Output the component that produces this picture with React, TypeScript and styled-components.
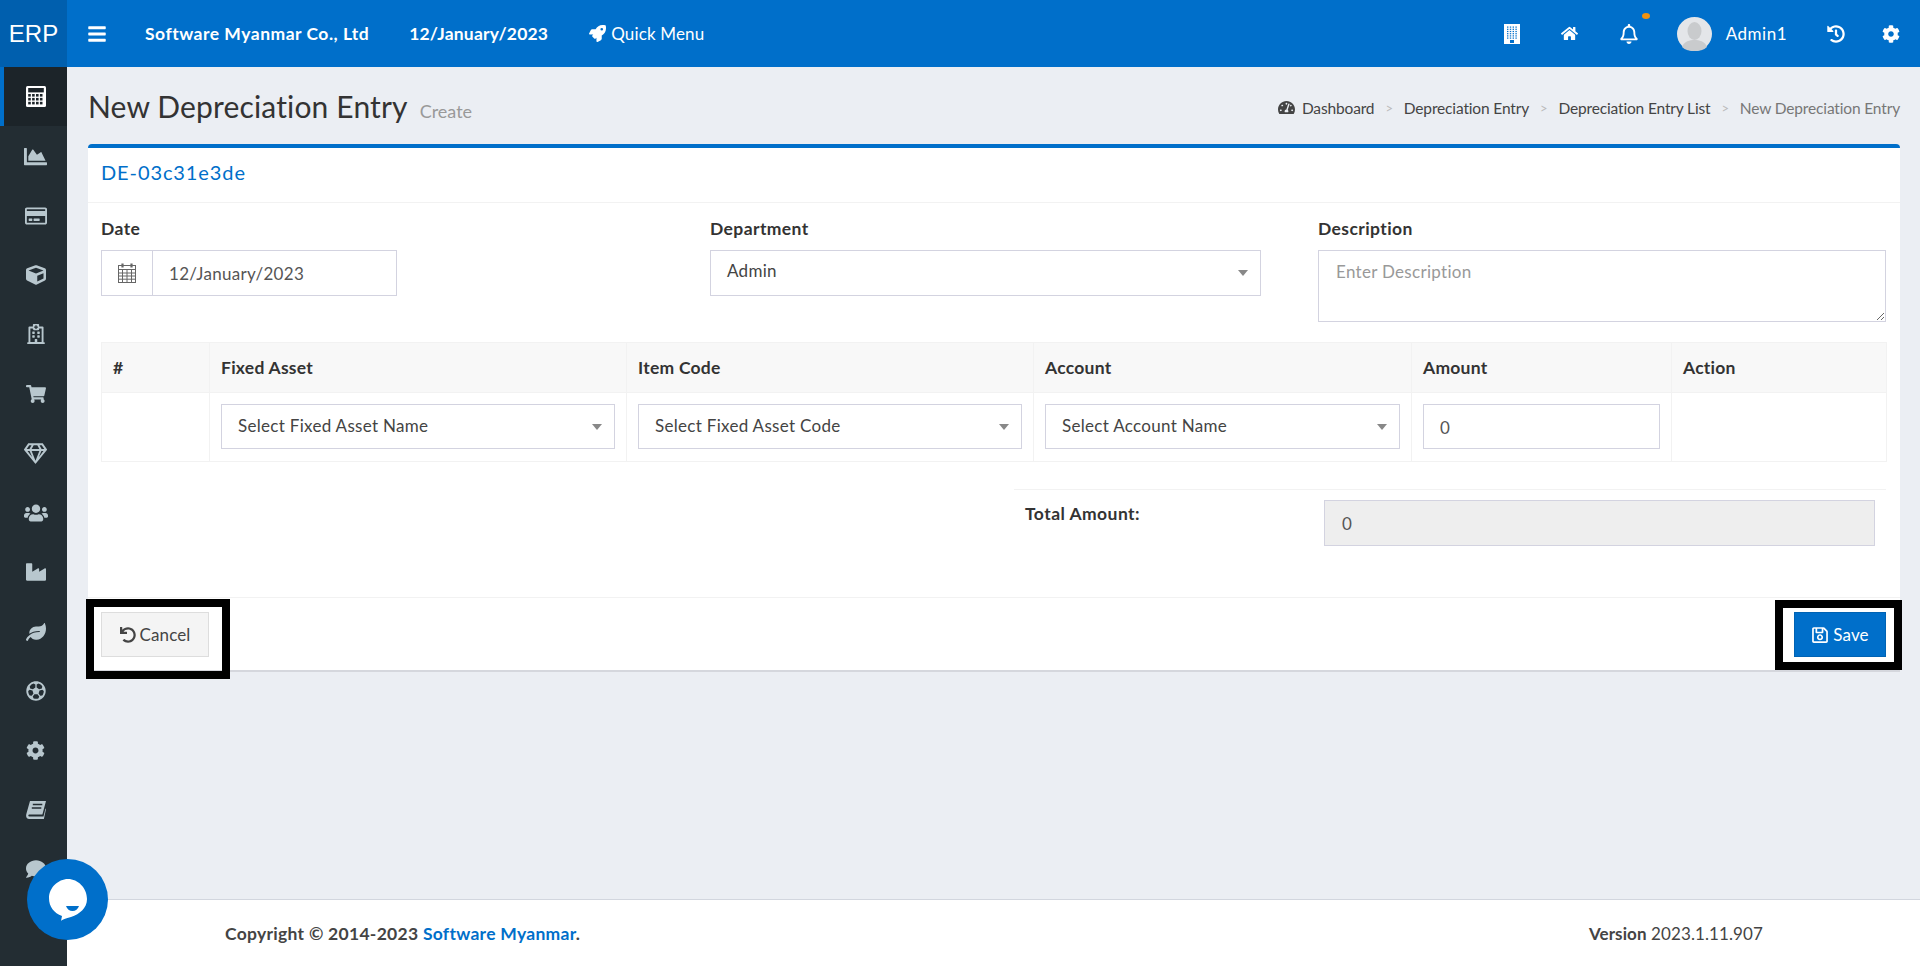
import React from "react";
import styled, { createGlobalStyle } from "styled-components";
import {
  FaBars,
  FaChartArea,
  FaCog,
  FaComment,
  FaCube,
  FaHistory,
  FaHome,
  FaIndustry,
  FaLeaf,
  FaRegBell,
  FaRegCreditCard,
  FaRegFutbol,
  FaRegGem,
  FaRegHospital,
  FaRegSave,
  FaRocket,
  FaShoppingCart,
  FaTachometerAlt,
  FaUndo,
  FaUsers,
} from "react-icons/fa";

const BLUE = "#006fca";
const FONT = `"Lato", "Noto Sans", sans-serif`;

const GlobalStyle = createGlobalStyle`
  html, body { margin: 0; padding: 0; height: 100%; }
  body { font-family: ${FONT}; font-size: 17px; color: #333; background: #ebeef3; overflow: hidden; }
  * { box-sizing: border-box; }
`;

const Page = styled.div`
  width: 1920px;
  height: 966px;
  display: flex;
  flex-direction: column;
`;

const TopBar = styled.header`
  height: 67px;
  flex: none;
  display: flex;
  align-items: center;
  background: ${BLUE};
  color: #fff;
`;

const Logo = styled.div`
  width: 67px;
  height: 67px;
  flex: none;
  display: flex;
  align-items: center;
  justify-content: center;
  background: #005fae;
  font-family: "Liberation Sans", Arial, sans-serif;
  font-size: 24px;
`;

const Burger = styled.span`
  display: flex;
  margin-left: 20px;
  font-size: 20px;
`;

const TopText = styled.span<{ $left: number; $bold?: boolean }>`
  margin-left: ${(p) => p.$left}px;
  font-size: ${(p) => (p.$bold ? 17.5 : 17)}px;
  font-weight: ${(p) => (p.$bold ? 700 : 400)};
  letter-spacing: ${(p) => (p.$bold ? 0.5 : 0.15)}px;
  display: flex;
  align-items: center;
  gap: 5px;
  white-space: nowrap;
`;

const UserName = styled(TopText)`
  letter-spacing: 0.5px;
`;

const TodayText = styled(TopText)`
  letter-spacing: 0.2px;
`;

const TopRight = styled.div`
  margin-left: auto;
  display: flex;
  align-items: center;
  padding-right: 20px;
`;

const TopIcon = styled.span<{ $left: number; $size?: number }>`
  position: relative;
  display: flex;
  margin-left: ${(p) => p.$left}px;
  font-size: ${(p) => p.$size ?? 18}px;
`;

const Dot = styled.i`
  position: absolute;
  top: -11px;
  right: -11px;
  width: 8px;
  height: 6px;
  border-radius: 50%;
  background: #f0920e;
`;

const Avatar = styled.svg`
  width: 35px;
  height: 34px;
  margin-left: 38px;
  display: block;
`;

const Body = styled.div`
  flex: 1;
  min-height: 0;
  display: flex;
`;

const SideBar = styled.nav`
  width: 67px;
  flex: none;
  background: #232d33;
  overflow: hidden;
`;

const SideItem = styled.div<{ $active?: boolean }>`
  height: 59.45px;
  display: flex;
  align-items: center;
  justify-content: center;
  color: #b8c7ce;
  background: ${(p) => (p.$active ? "#1c2429" : "transparent")};
  border-left: 4px solid ${(p) => (p.$active ? BLUE : "transparent")};
`;

const Main = styled.main`
  flex: 1;
  min-width: 0;
  display: flex;
  flex-direction: column;
`;

const Content = styled.div`
  flex: 1;
  padding: 0 20px 0 21px;
`;

const TitleRow = styled.div`
  height: 77px;
  display: flex;
  align-items: center;
  justify-content: space-between;
`;

const Title = styled.h1`
  margin: 0;
  font-size: 30px;
  font-weight: 400;
  letter-spacing: 0.15px;
  color: #333;
  white-space: nowrap;
`;

const SubTitle = styled.small`
  margin-left: 12px;
  font-size: 18px;
  letter-spacing: 0;
  color: #999;
`;

const Crumbs = styled.div`
  display: flex;
  align-items: center;
  padding-top: 4px;
  font-size: 15.5px;
  letter-spacing: -0.15px;
  color: #444;
`;

const CrumbIcon = styled.span`
  display: flex;
  margin-right: 7px;
  font-size: 17px;
`;

const CrumbSep = styled.span`
  margin: 0 11px;
  color: #bbb;
  font-size: 13px;
`;

const CrumbLast = styled.span`
  color: #777;
`;

const Card = styled.section`
  background: #fff;
  border-top: 4px solid ${BLUE};
  border-radius: 4px 4px 0 0;
  box-shadow: 0 2px 0 #d5d7dd;
`;

const CardHead = styled.div`
  height: 55px;
  display: flex;
  align-items: center;
  padding: 0 0 7px 13px;
  border-bottom: 1px solid #f2f2f2;
  color: ${BLUE};
  font-size: 20px;
  letter-spacing: 0.9px;
`;

const CardBody = styled.div`
  padding: 16px 14px 51px 13px;
`;

const FormGrid = styled.div`
  display: grid;
  grid-template-columns: 609px 608px 568px;
`;

const Field = styled.div<{ $width?: number }>`
  width: ${(p) => (p.$width ? `${p.$width}px` : "100%")};
`;

const Label = styled.label`
  display: block;
  height: 22px;
  margin-bottom: 9px;
  font-size: 17.5px;
  line-height: 20px;
  font-weight: 700;
  letter-spacing: 0.4px;
  color: #333;
`;

const DateGroup = styled.div`
  height: 46px;
  display: flex;
  border: 1px solid #d3d3e0;
`;

const Addon = styled.span`
  width: 51px;
  flex: none;
  display: flex;
  align-items: center;
  justify-content: center;
  border-right: 1px solid #d3d3e0;
`;

const TextInput = styled.input<{ $filled?: boolean }>`
  width: 100%;
  height: 100%;
  border: 0;
  outline: 0;
  padding: 1px 16px 0 ${(p) => (p.$filled ? 17 : 16)}px;
  font-family: ${FONT};
  font-size: 17px;
  letter-spacing: 0.3px;
  color: #555;
  background: ${(p) => (p.$filled ? "#eee" : "#fff")};
`;

const InputBox = styled.div<{ $height: number }>`
  height: ${(p) => p.$height}px;
  border: 1px solid #d3d3e0;
`;

const Select = styled.div<{ $height: number }>`
  position: relative;
  height: ${(p) => p.$height}px;
  display: flex;
  align-items: center;
  padding: 0 36px ${(p) => (p.$height > 45 ? 5 : 2)}px 16px;
  border: 1px solid #d3d3e0;
  font-size: 17px;
  letter-spacing: 0.3px;
  color: #444;
  white-space: nowrap;

  &::after {
    content: "";
    position: absolute;
    top: 50%;
    right: 12px;
    margin-top: -3px;
    border-style: solid;
    border-width: 6px 5px 0;
    border-color: #888 transparent transparent;
  }
`;

const Description = styled.textarea`
  display: block;
  width: 100%;
  height: 72px;
  padding: 10px 17px;
  border: 1px solid #d3d3e0;
  outline: 0;
  font-family: ${FONT};
  font-size: 17px;
  letter-spacing: 0.3px;
  color: #555;

  &::placeholder {
    color: #999;
    opacity: 1;
  }
`;

const EntryTable = styled.table`
  width: 100%;
  margin-top: 20px;
  border-collapse: collapse;
  table-layout: fixed;

  th,
  td {
    border: 1px solid #f2f2f2;
  }
`;

const HeadCell = styled.th<{ $width: number }>`
  width: ${(p) => p.$width}px;
  height: 50px;
  padding: 0 11px;
  background: #f8f8f8;
  text-align: left;
  font-size: 17.5px;
  font-weight: 700;
  letter-spacing: 0.25px;
`;

const Cell = styled.td`
  height: 69px;
  padding: 0 11px 1px;
`;

const TotalRow = styled.div`
  display: grid;
  grid-template-columns: 299px 551px;
  margin: 27px 0 0 913px;
  padding: 10px 0 0 11px;
  border-top: 1px solid #f2f2f2;
`;

const TotalLabel = styled.div`
  height: 24px;
  margin-top: 2px;
  line-height: 24px;
  font-weight: 700;
  font-size: 17.5px;
  letter-spacing: 0.45px;
`;

const CardFoot = styled.div`
  display: flex;
  justify-content: space-between;
  padding: 14px 14px 13px 13px;
  border-top: 1px solid #f2f2f2;
`;

const Marked = styled.div<{ $t: number; $r: number; $b: number; $l: number }>`
  position: relative;

  &::after {
    content: "";
    position: absolute;
    top: ${(p) => p.$t}px;
    right: ${(p) => p.$r}px;
    bottom: ${(p) => p.$b}px;
    left: ${(p) => p.$l}px;
    border: 8px solid #000;
    pointer-events: none;
  }
`;

const Button = styled.button<{ $primary?: boolean; $width: number }>`
  width: ${(p) => p.$width}px;
  height: 45px;
  display: flex;
  align-items: center;
  justify-content: center;
  gap: 4px;
  padding: 0;
  border: 1px solid ${(p) => (p.$primary ? "#0063b4" : "#ddd")};
  background: ${(p) => (p.$primary ? BLUE : "#f4f4f4")};
  color: ${(p) => (p.$primary ? "#fff" : "#444")};
  font-family: ${FONT};
  font-size: 17px;
  letter-spacing: 0.1px;
`;

const Footer = styled.footer`
  height: 67px;
  flex: none;
  display: flex;
  align-items: center;
  justify-content: space-between;
  padding: 0 157px 0 158px;
  background: #fff;
  border-top: 1px solid #d2d6de;
  color: #444;
`;

const Copyright = styled.b`
  font-size: 17.5px;
  letter-spacing: 0.28px;
`;

const FooterLink = styled.span`
  color: ${BLUE};
`;

const Version = styled.span`
  font-size: 17px;
  letter-spacing: 0.1px;
`;

const ChatBubble = styled.div`
  position: fixed;
  left: 27px;
  top: 859px;
  width: 81px;
  height: 81px;
  border-radius: 50%;
  background: ${BLUE};
  display: flex;
  align-items: center;
  justify-content: center;
`;

const CalculatorIcon = () => {
  const dots = [];
  for (let r = 0; r < 3; r++) {
    for (let c = 0; c < 4; c++) {
      dots.push(<rect key={`${r}${c}`} x={2.2 + c * 3.9} y={8 + r * 3.9} width="2.6" height="2.6" fill="#1c2429" />);
    }
  }
  return (
    <svg width="20" height="21" viewBox="0 0 20 21">
      <rect width="20" height="21" rx="1.5" fill="#fff" />
      <rect x="2.2" y="2" width="15.6" height="4.4" fill="#1c2429" />
      {dots}
    </svg>
  );
};

const BookIcon = () => (
  <svg width="20" height="18" viewBox="0 0 20 18">
    <path
      d="M4 0h16l-3.6 13.4H3.600c-1.700 0-1.700 2.200 0 2.200h13.900l2-8 .5.4-2.100 10H3.200C.4 18-.4 15.600.4 12.800z"
      fill="#b8c7ce"
    />
    <path d="M6.800 3.500h9.500M5.800 7h9.500" stroke="#232d33" strokeWidth="1.400" />
  </svg>
);

const CalendarIcon = () => (
  <svg width="18" height="20" viewBox="0 0 18 20" fill="none" stroke="#666" strokeWidth="1">
    <rect x="0.500" y="2.500" width="17" height="17" />
    <path d="M0 6.500h18M0 10h18M0 13h18M0 16.200h18M4.500 6.500v13M9 6.500v13M13.500 6.500v13" />
    <path d="M4.500 0.500v4M13.500 0.500v4" strokeWidth="2.200" />
  </svg>
);

const BuildingIcon = () => {
  const windows = [];
  for (let r = 0; r < 6; r++) {
    for (let c = 0; c < 4; c++) {
      windows.push(<rect key={`${r}${c}`} x={3 + c * 2.8} y={2.5 + r * 2.2} width="1.400" height="1.200" fill={BLUE} />);
    }
  }
  return (
    <svg width="16" height="20" viewBox="0 0 16 20">
      <rect width="16" height="20" fill="#fff" />
      {windows}
      <rect x="6" y="16" width="4" height="3" fill={BLUE} />
    </svg>
  );
};

const sideIcons = [
  <CalculatorIcon />,
  <FaChartArea size={23} />,
  <FaRegCreditCard size={22} />,
  <FaCube size={20} />,
  <FaRegHospital size={20} />,
  <FaShoppingCart size={20} />,
  <FaRegGem size={23} />,
  <FaUsers size={24} />,
  <FaIndustry size={20} />,
  <FaLeaf size={20} />,
  <FaRegFutbol size={20} />,
  <FaCog size={19} />,
  <BookIcon />,
  <FaComment size={20} />,
];

const columns: [string, number][] = [
  ["#", 108],
  ["Fixed Asset", 417],
  ["Item Code", 407],
  ["Account", 378],
  ["Amount", 260],
  ["Action", 215],
];

const App = () => {
  return (
    <Page>
      <GlobalStyle />
      <TopBar>
        <Logo>ERP</Logo>
        <Burger>
          <FaBars />
        </Burger>
        <TopText $left={38} $bold>
          Software Myanmar Co., Ltd
        </TopText>
        <TodayText $left={40} $bold>
          12/January/2023
        </TodayText>
        <TopText $left={41}>
          <FaRocket />
          Quick Menu
        </TopText>
        <TopRight>
          <TopIcon $left={0}>
            <BuildingIcon />
          </TopIcon>
          <TopIcon $left={41} $size={17}>
            <FaHome />
          </TopIcon>
          <TopIcon $left={41} $size={20}>
            <FaRegBell />
            <Dot />
          </TopIcon>
          <Avatar viewBox="0 0 35 34">
            <ellipse cx="17.500" cy="17" rx="17.500" ry="17" fill="#e4e6e9" />
            <ellipse cx="17.500" cy="14" rx="7" ry="9" fill="#c9cbcd" />
            <path d="M5 30c2-6 8-7 12.500-7S28 24 30 30c-3 3-8 4-12.500 4S8 33 5 30z" fill="#c9cbcd" />
          </Avatar>
          <UserName $left={14}>Admin1</UserName>
          <TopIcon $left={40}>
            <FaHistory />
          </TopIcon>
          <TopIcon $left={37}>
            <FaCog />
          </TopIcon>
        </TopRight>
      </TopBar>
      <Body>
        <SideBar>
          {sideIcons.map((icon, i) => (
            <SideItem key={i} $active={i === 0}>
              {icon}
            </SideItem>
          ))}
        </SideBar>
        <Main>
          <Content>
            <TitleRow>
              <Title>
                New Depreciation Entry
                <SubTitle>Create</SubTitle>
              </Title>
              <Crumbs>
                <CrumbIcon>
                  <FaTachometerAlt />
                </CrumbIcon>
                Dashboard
                <CrumbSep>&gt;</CrumbSep>
                Depreciation Entry
                <CrumbSep>&gt;</CrumbSep>
                Depreciation Entry List
                <CrumbSep>&gt;</CrumbSep>
                <CrumbLast>New Depreciation Entry</CrumbLast>
              </Crumbs>
            </TitleRow>
            <Card>
              <CardHead>DE-03c31e3de</CardHead>
              <CardBody>
                <FormGrid>
                  <Field $width={296}>
                    <Label>Date</Label>
                    <DateGroup>
                      <Addon>
                        <CalendarIcon />
                      </Addon>
                      <TextInput defaultValue="12/January/2023" />
                    </DateGroup>
                  </Field>
                  <Field $width={551}>
                    <Label>Department</Label>
                    <Select $height={46}>Admin</Select>
                  </Field>
                  <Field>
                    <Label>Description</Label>
                    <Description placeholder="Enter Description" />
                  </Field>
                </FormGrid>
                <EntryTable>
                  <thead>
                    <tr>
                      {columns.map(([name, width]) => (
                        <HeadCell key={name} $width={width}>
                          {name}
                        </HeadCell>
                      ))}
                    </tr>
                  </thead>
                  <tbody>
                    <tr>
                      <Cell />
                      <Cell>
                        <Select $height={45}>Select Fixed Asset Name</Select>
                      </Cell>
                      <Cell>
                        <Select $height={45}>Select Fixed Asset Code</Select>
                      </Cell>
                      <Cell>
                        <Select $height={45}>Select Account Name</Select>
                      </Cell>
                      <Cell>
                        <InputBox $height={45}>
                          <TextInput defaultValue="0" />
                        </InputBox>
                      </Cell>
                      <Cell />
                    </tr>
                  </tbody>
                </EntryTable>
                <TotalRow>
                  <TotalLabel>Total Amount:</TotalLabel>
                  <InputBox $height={46}>
                    <TextInput $filled readOnly defaultValue="0" />
                  </InputBox>
                </TotalRow>
              </CardBody>
              <CardFoot>
                <Marked $t={-13} $r={-21} $b={-22} $l={-15}>
                  <Button $width={108}>
                    <FaUndo size={16} />
                    Cancel
                  </Button>
                </Marked>
                <Marked $t={-12} $r={-16} $b={-13} $l={-19}>
                  <Button $primary $width={92}>
                    <FaRegSave size={18} />
                    Save
                  </Button>
                </Marked>
              </CardFoot>
            </Card>
          </Content>
          <Footer>
            <Copyright>
              Copyright © 2014-2023 <FooterLink>Software Myanmar</FooterLink>.
            </Copyright>
            <Version>
              <b>Version</b> 2023.1.11.907
            </Version>
          </Footer>
        </Main>
      </Body>
      <ChatBubble>
        <svg width="38" height="42" viewBox="0 0 38 42">
          <path
            d="M19 0c10 0 19 9 19 20 0 9-7 15-16 18-5 1-9 3-10 4l1-5C5 34 0 28 0 19 0 9 9 0 19 0z"
            fill="#fff"
          />
          <path d="M17 27h13c-1 3-3.500 5-6.500 5s-5.500-2-6.500-5z" fill={BLUE} />
        </svg>
      </ChatBubble>
    </Page>
  );
};

export default App;
